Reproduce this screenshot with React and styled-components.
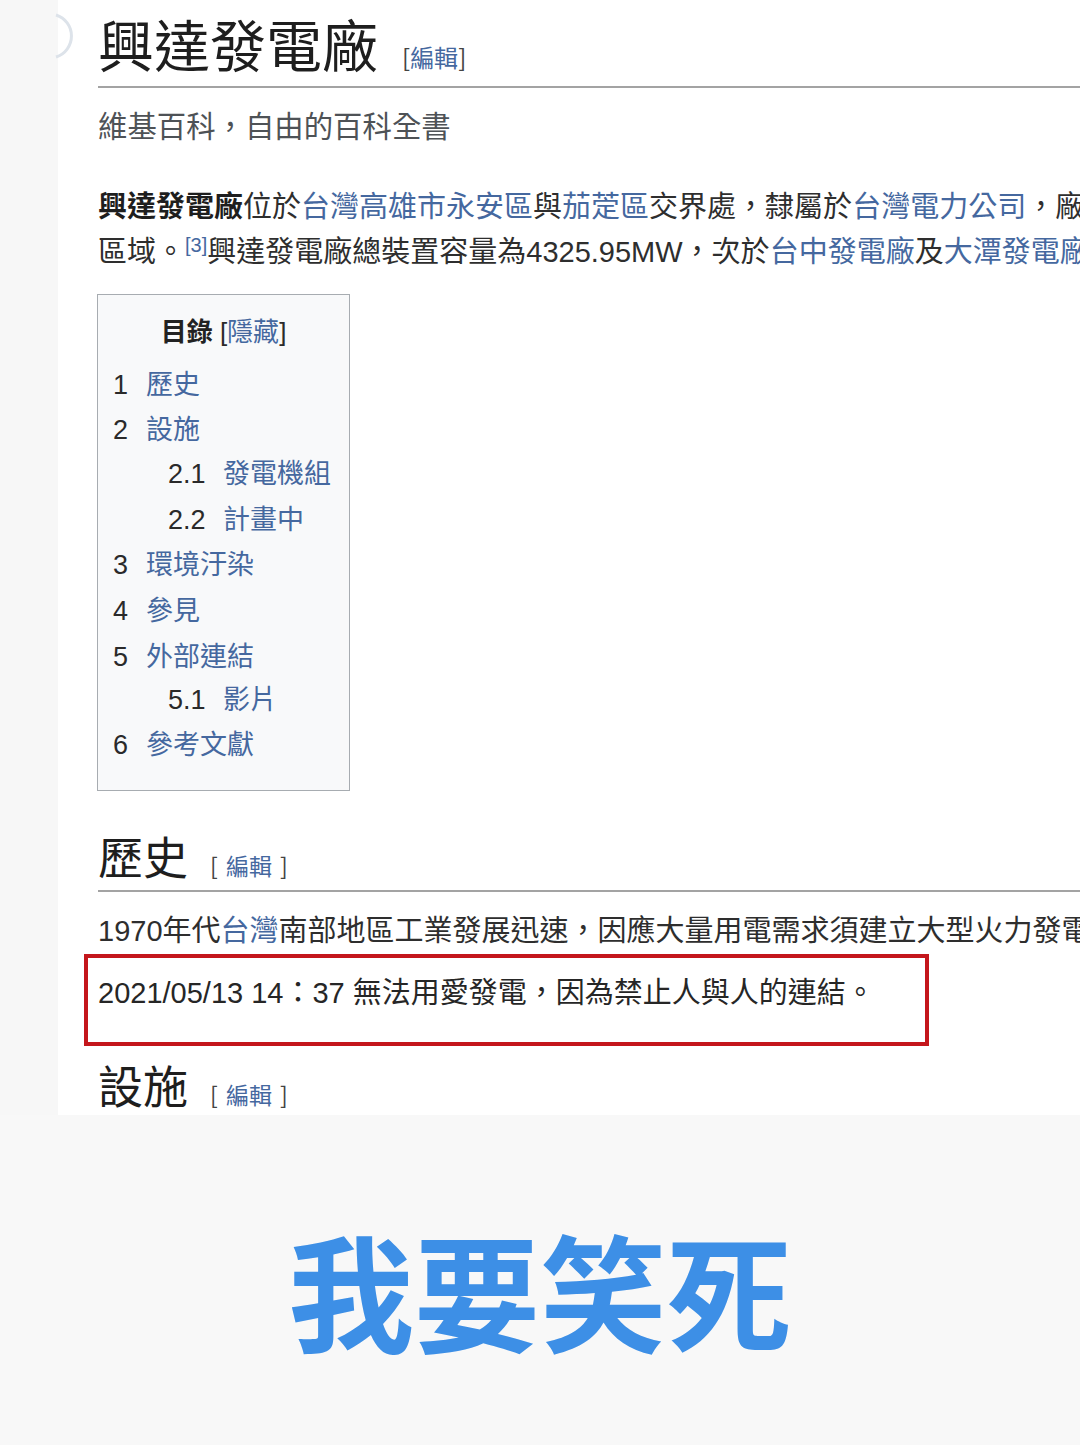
import React from "react";
import styled, { createGlobalStyle } from "styled-components";

const GlobalStyle = createGlobalStyle`
  html, body { margin: 0; padding: 0; background: #f8f8f8; }
  body { font-family: "Liberation Sans", "Noto Sans CJK TC", sans-serif; }
`;

const Page = styled.div`
  width: 1080px;
  height: 1445px;
  display: flex;
  flex-direction: column;
  background: #f8f8f8;
  overflow: hidden;
`;

const Shot = styled.div`
  display: grid;
  grid-template-columns: 58px 1fr;
  height: 1115px;
`;

const Strip = styled.div`
  position: relative;
  background: #f7f7f7;
`;

const Arc = styled.svg`
  position: absolute;
  left: 44px;
  top: 12px;
`;

const Panel = styled.div`
  background: #fff;
  padding-left: 40px;
  overflow: hidden;
  color: #2a2a2a;
`;

const Heading = styled.div`
  display: flex;
  align-items: baseline;
  gap: ${(p) => p.$gap}px;
  border-bottom: ${(p) => p.$rule}px solid #a3a3a3;
  padding-top: ${(p) => p.$top}px;
  padding-bottom: ${(p) => p.$bottom}px;
  white-space: nowrap;
`;

const HeadText = styled.span`
  font-family: "Noto Sans CJK TC", sans-serif;
  font-weight: 400;
  font-size: ${(p) => p.$size}px;
  line-height: 1.1;
  color: #1e1e1e;
`;

const EditLink = styled.span`
  font-family: "Noto Sans CJK TC", sans-serif;
  font-size: ${(p) => p.$size}px;
  color: #444;
  word-spacing: ${(p) => p.$spacing}px;
  a {
    color: #45689f;
  }
`;

const Tagline = styled.div`
  font-family: "Noto Sans CJK TC", sans-serif;
  font-size: 29.4px;
  line-height: 40px;
  color: #4e5256;
  margin-top: 16px;
`;

const Para = styled.div`
  margin-top: ${(p) => p.$top}px;
  font-size: 29px;
  line-height: 45px;
  color: #2e2e2e;
  white-space: nowrap;
`;

const Line = styled.div``;

const Link = styled.span`
  color: #45689f;
`;

const Bold = styled.b`
  font-weight: 700;
  color: #1e1e1e;
`;

const Sup = styled.sup`
  font-size: 20px;
  color: #45689f;
  vertical-align: 10px;
  line-height: 0;
`;

const Toc = styled.div`
  margin-top: 19px;
  margin-left: -1px;
  width: 253px;
  height: 497px;
  border: 1px solid #a7acb1;
  background: #f8f9fa;
  padding: 17px 0 0 15px;
  box-sizing: border-box;
  font-size: 27px;
  line-height: 45px;
`;

const TocTitle = styled.div`
  text-align: center;
  padding-right: 15px;
  font-size: 26px;
  line-height: 40px;
  margin-bottom: 11px;
  b {
    font-weight: 700;
    color: #222;
  }
`;

const TocItem = styled.div`
  display: flex;
  padding-left: ${(p) => (p.$sub ? 55 : 0)}px;
  height: ${(p) => p.$h || 45}px;
`;

const TocNum = styled.span`
  color: #2a2a2a;
  width: ${(p) => (p.$sub ? 55 : 33)}px;
  flex: none;
`;

const TocText = styled.span`
  color: #45689f;
`;

const Boxed = styled.div`
  margin-left: -14px;
  margin-top: 0;
  width: 845px;
  height: 92px;
  box-sizing: border-box;
  border: 4px solid #c4161c;
  padding: 15px 0 0 10px;
  font-size: 29px;
  line-height: 40px;
  color: #262626;
  white-space: nowrap;
`;

const Caption = styled.div`
  flex: 1;
  display: flex;
  align-items: center;
  justify-content: center;
  padding-top: 16px;
  font-family: "Noto Sans CJK TC", sans-serif;
  font-weight: 700;
  font-size: 126px;
  color: #3d8fe6;
`;

export default function App() {
  return (
    <>
      <GlobalStyle />
      <Page lang="zh-TW">
        <Shot>
          <Strip>
            <Arc width="30" height="48" viewBox="0 0 30 48">
              <path d="M12 3 A 22 22 0 0 1 12 45" fill="none" stroke="#dde3ea" strokeWidth="3" />
            </Arc>
          </Strip>
          <Panel>
            <Heading $gap={24} $rule={2} $top={12} $bottom={12}>
              <HeadText $size={56}>興達發電廠</HeadText>
              <EditLink $size={24} $spacing={0}>
                [<a>編輯</a>]
              </EditLink>
            </Heading>
            <Tagline>維基百科，自由的百科全書</Tagline>
            <Para $top={41}>
              <Line>
                <Bold>興達發電廠</Bold>位於<Link>台灣</Link>
                <Link>高雄市</Link>
                <Link>永安區</Link>與<Link>茄萣區</Link>交界處，隸屬於
                <Link>台灣電力公司</Link>，廠
              </Line>
              <Line>
                區域。<Sup>[3]</Sup>興達發電廠總裝置容量為4325.95MW，次於<Link>台中發電廠</Link>及
                <Link>大潭發電廠</Link>
              </Line>
            </Para>
            <Toc>
              <TocTitle>
                <b>目錄</b> [<Link>隱藏</Link>]
              </TocTitle>
              <TocItem>
                <TocNum>1</TocNum>
                <TocText>歷史</TocText>
              </TocItem>
              <TocItem $h={44}>
                <TocNum>2</TocNum>
                <TocText>設施</TocText>
              </TocItem>
              <TocItem $sub $h={46}>
                <TocNum $sub>2.1</TocNum>
                <TocText>發電機組</TocText>
              </TocItem>
              <TocItem $sub>
                <TocNum $sub>2.2</TocNum>
                <TocText>計畫中</TocText>
              </TocItem>
              <TocItem $h={46}>
                <TocNum>3</TocNum>
                <TocText>環境汙染</TocText>
              </TocItem>
              <TocItem $h={46}>
                <TocNum>4</TocNum>
                <TocText>參見</TocText>
              </TocItem>
              <TocItem $h={43}>
                <TocNum>5</TocNum>
                <TocText>外部連結</TocText>
              </TocItem>
              <TocItem $sub>
                <TocNum $sub>5.1</TocNum>
                <TocText>影片</TocText>
              </TocItem>
              <TocItem>
                <TocNum>6</TocNum>
                <TocText>參考文獻</TocText>
              </TocItem>
            </Toc>
            <Heading $gap={22} $rule={2} $top={40} $bottom={8}>
              <HeadText $size={45}>歷史</HeadText>
              <EditLink $size={23} $spacing={3}>
                [ <a>編輯</a> ]
              </EditLink>
            </Heading>
            <Para $top={17}>
              <Line>
                1970年代<Link>台灣</Link>南部地區工業發展迅速，因應大量用電需求須建立大型火力發電廠
              </Line>
            </Para>
            <Boxed>2021/05/13 14：37 無法用愛發電，因為禁止人與人的連結。</Boxed>
            <Heading $gap={22} $rule={0} $top={14} $bottom={0}>
              <HeadText $size={45}>設施</HeadText>
              <EditLink $size={23} $spacing={3}>
                [ <a>編輯</a> ]
              </EditLink>
            </Heading>
          </Panel>
        </Shot>
        <Caption>我要笑死</Caption>
      </Page>
    </>
  );
}
